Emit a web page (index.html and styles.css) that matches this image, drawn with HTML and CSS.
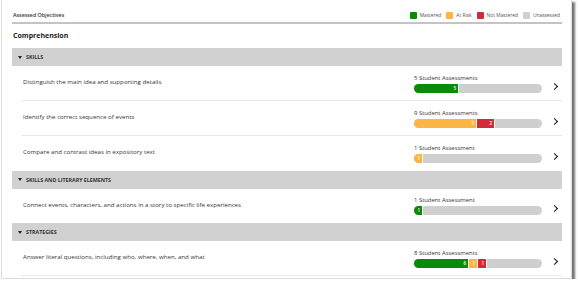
FILE: index.html
```html
<!DOCTYPE html>
<html lang="en">
<head>
    <meta charset="UTF-8">
    <title>Assessed Objectives</title>
    <link rel="stylesheet" href="styles.css">
</head>
<body>
    <div class="card">
        <div class="card-head">
            <span class="card-title">Assessed Objectives</span>
            <ul class="legend">
                <li><span class="swatch mastered"></span>Mastered</li>
                <li><span class="swatch at-risk"></span>At Risk</li>
                <li><span class="swatch not-mastered"></span>Not Mastered</li>
                <li><span class="swatch unassessed"></span>Unassessed</li>
            </ul>
        </div>
        <h2 class="strand">Comprehension</h2>

        <div class="group-head"><span class="caret"></span>SKILLS</div>
        <div class="row">
            <div class="objective">Distinguish the main idea and supporting details</div>
            <div class="stats">
                <div class="count">5 Student Assessments</div>
                <div class="bar">
                    <span class="seg mastered" style="width: 45px">5</span>
                </div>
            </div>
            <div class="go"><span class="chev"></span></div>
        </div>
        <div class="row">
            <div class="objective">Identify the correct sequence of events</div>
            <div class="stats">
                <div class="count">9 Student Assessments</div>
                <div class="bar">
                    <span class="seg at-risk" style="width: 63px">7</span>
                    <span class="seg not-mastered" style="width: 18px">2</span>
                </div>
            </div>
            <div class="go"><span class="chev"></span></div>
        </div>
        <div class="row last">
            <div class="objective">Compare and contrast ideas in expository text</div>
            <div class="stats">
                <div class="count">1 Student Assessment</div>
                <div class="bar">
                    <span class="seg at-risk" style="width: 9px">1</span>
                </div>
            </div>
            <div class="go"><span class="chev"></span></div>
        </div>

        <div class="group-head"><span class="caret"></span>SKILLS AND LITERARY ELEMENTS</div>
        <div class="row last">
            <div class="objective">Connect events, characters, and actions in a story to specific life experiences</div>
            <div class="stats">
                <div class="count">1 Student Assessment</div>
                <div class="bar">
                    <span class="seg mastered" style="width: 9px">1</span>
                </div>
            </div>
            <div class="go"><span class="chev"></span></div>
        </div>

        <div class="group-head"><span class="caret"></span>STRATEGIES</div>
        <div class="row">
            <div class="objective">Answer literal questions, including who, where, when, and what</div>
            <div class="stats">
                <div class="count">8 Student Assessments</div>
                <div class="bar">
                    <span class="seg mastered" style="width: 55px">6</span>
                    <span class="seg at-risk" style="width: 9px">1</span>
                    <span class="seg not-mastered" style="width: 9px">1</span>
                </div>
            </div>
            <div class="go"><span class="chev"></span></div>
        </div>
    </div>
</body>
</html>
```

FILE: styles.css
```css
/* General body styling */
body {
    font-family: 'Open Sans', 'Liberation Sans', sans-serif;
    margin: 0;
    padding: 0;
    background: #fff;
    color: #333;
}

.card {
    width: 550px;
    margin: -1px 0 0 1px;
    padding: 9px 9px 2px 10px;
    border: 1px solid #dcdcdc;
    background: #fff;
    box-shadow: 3px 3px 2px rgba(0, 0, 0, 0.55);
}

.card-head {
    display: flex;
    justify-content: space-between;
    align-items: center;
    height: 12px;
    padding-bottom: 1px;
    border-bottom: 2px solid #c4c4c4;
}

.card-title {
    font-size: 5.3px;
    font-weight: 600;
    padding-left: 1px;
}

.legend {
    display: flex;
    gap: 5px;
    list-style: none;
    margin: 0;
    padding: 0 2px 0 0;
    font-size: 4.9px;
    color: #555;
}

.legend li {
    display: flex;
    align-items: center;
}

.swatch {
    width: 7px;
    height: 7px;
    margin-right: 3px;
    border-radius: 1px;
}

.mastered { background: #0a8a0a; }
.at-risk { background: #fbb545; }
.not-mastered { background: #d22a3a; }
.unassessed { background: #cfcfcf; }

.strand {
    margin: 0;
    padding: 7px 0 0 1px;
    height: 24px;
    box-sizing: border-box;
    font-size: 7px;
    font-weight: 700;
    color: #222;
}

.group-head {
    display: flex;
    align-items: center;
    height: 18px;
    padding-left: 6px;
    background: #d1d1d1;
    font-size: 5.3px;
    font-weight: 700;
    color: #333;
}

.caret {
    width: 0;
    height: 0;
    margin-right: 4px;
    border-left: 2.5px solid transparent;
    border-right: 2.5px solid transparent;
    border-top: 3px solid #222;
}

.row {
    display: flex;
    align-items: center;
    height: 34px;
    margin-left: 9px;
    border-bottom: 1px solid #e8e8e8;
}

.row.last {
    border-bottom: none;
    height: 34.5px;
}

.objective {
    flex: 1;
    padding: 0 0 3px 2px;
    font-size: 6.15px;
    color: #333;
}

.stats {
    width: 128px;
}

.count {
    font-size: 5.9px;
    color: #333;
    margin-bottom: 2px;
}

.bar {
    display: flex;
    height: 9px;
    border-radius: 4.5px;
    background: #cfcfcf;
    overflow: hidden;
}

.seg {
    box-sizing: border-box;
    border-right: 1.5px solid #fff;
    padding-right: 2px;
    text-align: right;
    font-size: 4.5px;
    line-height: 9px;
    font-weight: 600;
    color: #fff;
}

.go {
    width: 20px;
    display: flex;
    justify-content: flex-end;
    padding-top: 6px;
}

.chev {
    width: 4px;
    height: 4px;
    margin-right: 5px;
    border-top: 1.7px solid #111;
    border-right: 1.7px solid #111;
    transform: rotate(45deg);
}
```
